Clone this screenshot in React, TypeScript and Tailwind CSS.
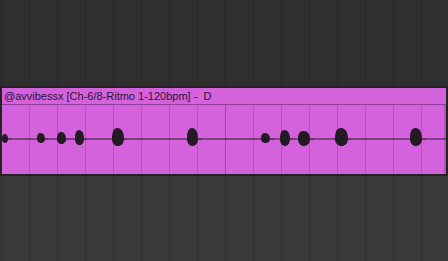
import React from "react";

const cols = Array.from({ length: 16 }, (_, i) => i);

// x0, x1, top, bottom in page pixels
const blobs: [number, number, number, number][] = [
  [2, 8, 134, 143],
  [37, 45, 133, 143],
  [57, 66, 132, 144],
  [75, 84, 130, 145],
  [112, 124, 128, 146],
  [187, 198, 128, 146],
  [261, 270, 133, 143],
  [280, 290, 130, 146],
  [298, 310, 131, 146],
  [335, 348, 128, 146],
  [410, 422, 128, 146],
];

function blobPath(x0: number, x1: number, top: number, bot: number) {
  const ox = 2;
  const oy = 105;
  const c = 139 - oy;
  const a = x0 - ox;
  const b = x1 - ox;
  const w = b - a;
  const tp = top - oy;
  const h = c - tp;
  const d = c + (bot - oy - c) / 0.75;
  const p = a + w * 0.45;
  return (
    `M${a},${c} C${a},${c - h * 0.7} ${p - w * 0.3},${tp} ${p},${tp} ` +
    `C${p + w * 0.35},${tp} ${b},${c - h * 0.6} ${b},${c} ` +
    `L${b + 3},${c - 0.6} L${b + 3},${c + 0.6} L${b},${c} ` +
    `C${b},${d} ${a},${d} ${a},${c} Z`
  );
}

function Grid({ line, bar }: { line: string; bar: string }) {
  return (
    <div className="absolute inset-0 flex pl-px">
      {cols.map((i) => (
        <div
          key={i}
          className={`w-[28px] shrink-0 border-l ${i === 8 ? bar : line}`}
        />
      ))}
    </div>
  );
}

export default function App() {
  return (
    <div className="w-[448px] h-[261px] flex flex-col bg-[#1f1f1f] overflow-hidden">
      <div className="relative h-[86px] bg-[#2f2f2f]">
        <Grid line="border-[#272727]" bar="border-[#262626]" />
      </div>
      <div className="h-[2px] bg-[#222222]" />
      <div className="h-[86px] px-[2px] bg-[#232323]">
        <div className="h-full flex flex-col bg-[#d462dd]">
          <div className="h-[17px] flex items-center px-[2px] pt-px border-b border-[#8e3d98] font-['Liberation_Sans',Arial,sans-serif] text-[11px] leading-none text-[#2a1630] whitespace-pre">
            @avvibessx [Ch-6/8-Ritmo 1-120bpm] -  D
          </div>
          <div className="relative flex-1">
            <div className="absolute inset-0 flex -ml-[2px] pl-px">
              {cols.map((i) => (
                <div
                  key={i}
                  className={`w-[28px] shrink-0 border-l ${
                    i === 0 ? "border-transparent" : i === 8 ? "border-[#9b46a4]" : "border-[#b552be]"
                  }`}
                />
              ))}
            </div>
            <div className="absolute right-0 top-0 bottom-0 w-[2px] bg-[#b552be]" />
            <svg
              className="absolute inset-0"
              width="444"
              height="69"
              viewBox="0 0 444 69"
            >
              <line x1="0" y1="34" x2="444" y2="34" stroke="#2a1a2c" strokeWidth="1.2" />
              {blobs.map(([a, b, t, d], i) => (
                <path key={i} d={blobPath(a, b, t, d)} fill="#231a24" />
              ))}
            </svg>
          </div>
        </div>
      </div>
      <div className="h-[2px] bg-[#222222]" />
      <div className="relative flex-1 bg-[#3a3a3a]">
        <Grid line="border-[#313131]" bar="border-[#303030]" />
      </div>
    </div>
  );
}
